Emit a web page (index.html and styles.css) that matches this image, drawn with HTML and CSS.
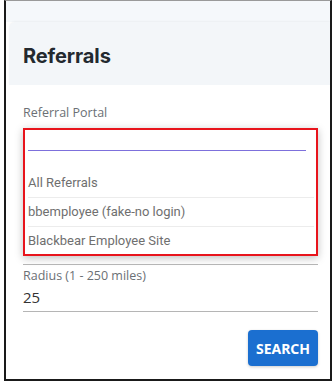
FILE: index.html
```html
<!DOCTYPE html>
<html lang="en">
<head>
  <meta charset="UTF-8">
  <meta name="viewport" content="width=device-width, initial-scale=1.0">
  <title>Referrals</title>
  <link rel="stylesheet" href="styles.css">
</head>
<body>

  <div class="frame">
    <div class="top-strip"></div>

    <!-- Card header -->
    <div class="card-head">
      <h2>Referrals</h2>
    </div>

    <!-- Search form -->
    <div class="card-body">
      <label class="field-label">Referral Portal</label>

      <div class="dropdown">
        <div class="dropdown-search"></div>
        <ul class="dropdown-list">
          <li>All Referrals</li>
          <li>bbemployee (fake-no login)</li>
          <li>Blackbear Employee Site</li>
        </ul>
      </div>
      <div class="select-line"></div>

      <label class="field-label radius-label">Radius (1 - 250 miles)</label>
      <div class="text-field">25</div>

      <div class="actions">
        <button class="btn">SEARCH</button>
      </div>
    </div>
  </div>

</body>
</html>
```

FILE: styles.css
```css
body {
  margin: 0;
  background-color: #fff;
  font-family: "Open Sans", "Noto Sans", sans-serif;
}

.frame {
  box-sizing: border-box;
  margin-left: 4px;
  width: 328px;
  height: 381px;
  border-top: 1px solid #9a9a9a;
  border-left: 2px solid #1a1a1a;
  border-right: 2px solid #1a1a1a;
  border-bottom: 2px solid #1a1a1a;
  background-color: #fff;
  overflow: hidden;
}

.top-strip {
  height: 21px;
  background-color: #f5f8fb;
}

.card-head {
  height: 63px;
  margin-left: 3px;
  padding-left: 14px;
  background-color: #f3f6f9;
  border-top-left-radius: 6px;
  box-shadow: 0 -1px 2px rgba(0, 0, 0, 0.04);
  display: flex;
  align-items: center;
}

.card-head h2 {
  margin: 0;
  padding-top: 4px;
  font-family: Inter, "Noto Sans", sans-serif;
  font-size: 20px;
  font-weight: 700;
  color: #23292f;
  letter-spacing: -0.1px;
}

.card-body {
  padding: 19px 12px 0 17px;
}

.field-label {
  display: block;
  font-size: 12.5px;
  line-height: 18px;
  color: #6b7075;
}

.dropdown {
  margin-top: 6px;
  height: 128px;
  box-sizing: border-box;
  border: 2px solid #e8141c;
  background-color: #fff;
  box-shadow: 0 2px 8px rgba(0, 0, 0, 0.25);
  padding: 20px 2px 0 3px;
}

.dropdown-search {
  height: 0;
  margin-right: 8px;
  border-bottom: 1.5px solid #7d70dc;
}

.dropdown-list {
  list-style: none;
  margin: 18px 0 0;
  padding: 0;
}

.dropdown-list li {
  height: 28px;
  line-height: 28px;
  font-family: Roboto, "Noto Sans", sans-serif;
  font-size: 13px;
  color: #6f6f6f;
  border-bottom: 1px solid #ececec;
}

.dropdown-list li:last-child {
  border-bottom: none;
}

.select-line {
  margin-top: 8px;
  height: 1px;
  background-color: #b5b5b5;
}

.radius-label {
  margin-top: 2px;
}

.text-field {
  font-size: 15px;
  line-height: 22px;
  color: #333;
  padding-top: 1px;
  border-bottom: 1px solid #b5b5b5;
  padding-bottom: 3px;
}

.actions {
  display: flex;
  justify-content: flex-end;
  margin-top: 18px;
}

.btn {
  width: 70px;
  height: 36px;
  padding: 0;
  border: none;
  border-radius: 4px;
  background-color: #1b6fd0;
  color: #fff;
  font-family: "Noto Sans", "Open Sans", sans-serif;
  font-size: 14px;
  font-weight: 700;
  box-shadow: 0 1px 3px rgba(0, 0, 0, 0.2);
  cursor: pointer;
}
```
